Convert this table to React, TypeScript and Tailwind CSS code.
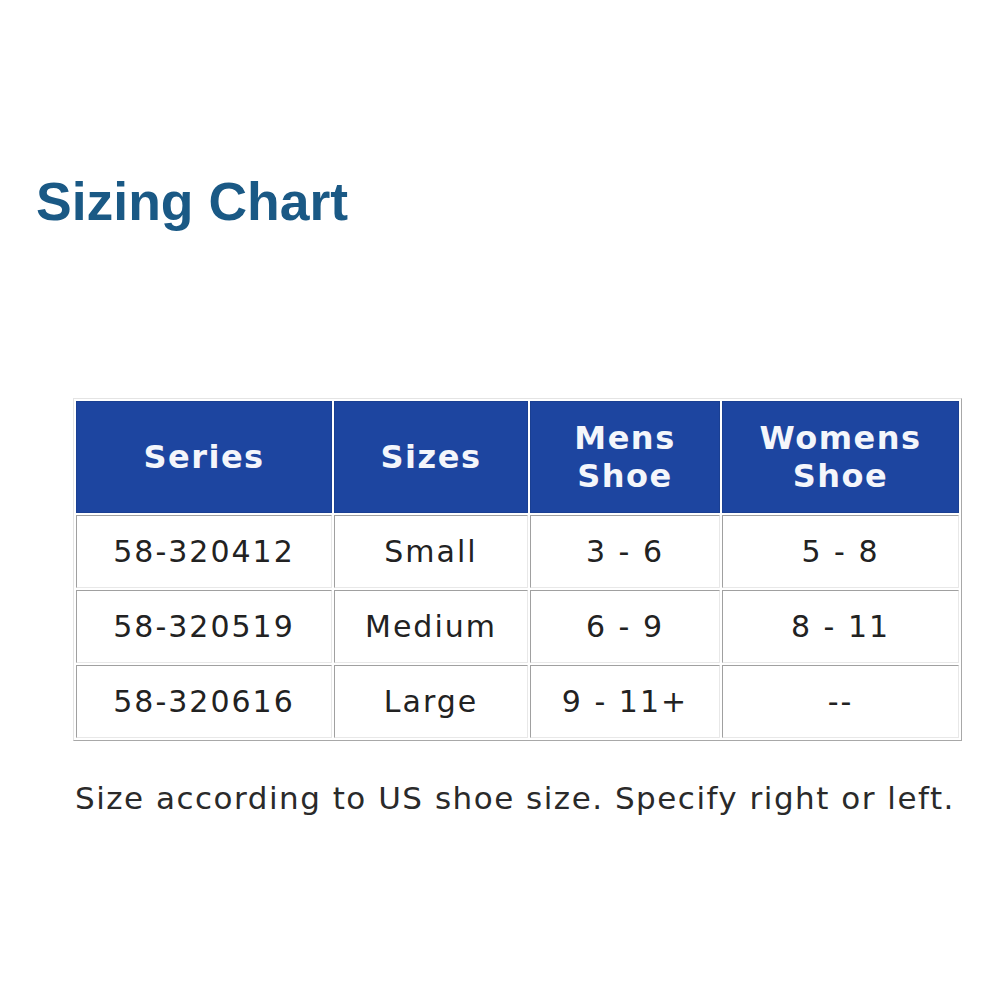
const rows = [
  ["58-320412", "Small", "3 - 6", "5 - 8"],
  ["58-320519", "Medium", "6 - 9", "8 - 11"],
  ["58-320616", "Large", "9 - 11+", "--"],
];

export default function App() {
  return (
    <div className="w-[1000px] h-[1000px] bg-white flex flex-col" style={{ fontFamily: '"DejaVu Sans", Verdana, sans-serif' }}>
      <h1 className="ml-[36px] mt-[170px] text-[53.5px] leading-[64px] font-bold text-[#1a5985]" style={{ fontFamily: '"Liberation Sans", Arial, sans-serif' }}>
        Sizing Chart
      </h1>

      <div className="ml-[73px] mt-[164px] w-[889px] border border-t-[#e4e4e4] border-l-[#e4e4e4] border-r-[#a8a8a8] border-b-[#a8a8a8] border-solid">
        <table className="border-separate border-spacing-[2px] w-full">
          <colgroup>
            <col className="w-[256px]" />
            <col className="w-[194px]" />
            <col className="w-[190px]" />
            <col />
          </colgroup>
          <thead>
            <tr className="h-[112px]">
              {["Series", "Sizes", "Mens\nShoe", "Womens\nShoe"].map((h) => (
                <th key={h} className="bg-[#1d45a0] border border-[#1a3f92] text-[#f4f6fb] font-bold text-[32px] leading-[38px] tracking-[1.5px] whitespace-pre-line text-center align-middle">
                  {h}
                </th>
              ))}
            </tr>
          </thead>
          <tbody>
            {rows.map((r) => (
              <tr key={r[0]} className="h-[73px]">
                {r.map((c, i) => (
                  <td key={i} className="border border-t-[#a0a0a0] border-l-[#a0a0a0] border-r-[#e8e8e8] border-b-[#e8e8e8] text-[#222] text-[30px] tracking-[2px] text-center align-middle">
                    {c}
                  </td>
                ))}
              </tr>
            ))}
          </tbody>
        </table>
      </div>

      <p className="ml-[75px] mt-[34px] text-[31px] text-[#2a2a2a] tracking-[1.5px] whitespace-nowrap">
        Size according to US shoe size. Specify right or left.
      </p>
    </div>
  );
}
